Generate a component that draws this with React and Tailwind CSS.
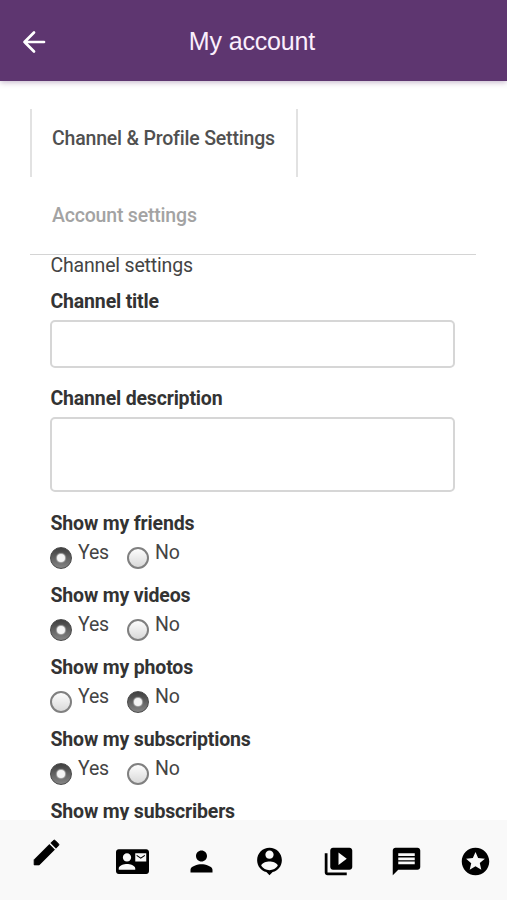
import React from "react";
import {
  MdContactMail,
  MdPerson,
  MdVideoLibrary,
  MdMessage,
  MdStars,
} from "react-icons/md";

function Radio({ checked }) {
  return checked ? (
    <span className="mt-3 flex h-[22px] w-[22px] shrink-0 items-center justify-center rounded-full border border-[#4a4a4a] bg-linear-to-b from-[#404040] to-[#858585]">
      <span className="h-2 w-2 rounded-full bg-[#f4f4f4] shadow-[0_0_1px_1px_#aaa]" />
    </span>
  ) : (
    <span className="mt-3 h-[22px] w-[22px] shrink-0 rounded-full border-2 border-[#808080] bg-linear-to-b from-[#fdfdfd] to-[#d9d9d9]" />
  );
}

function Option({ label, checked }) {
  return (
    <div className="flex h-[34px] w-[77px] gap-[6px]">
      <Radio checked={checked} />
      <span className="text-[19.5px] leading-[36px] tracking-[-0.2px] text-[#444]">{label}</span>
    </div>
  );
}

function Setting({ label, value }) {
  return (
    <div className="h-[72px]">
      <Label>{label}</Label>
      <div className="flex">
        <Option label="Yes" checked={value === "yes"} />
        <Option label="No" checked={value === "no"} />
      </div>
    </div>
  );
}

function Label({ children }) {
  return (
    <div className="h-6 pl-[0.5px] text-[19.5px] leading-[26px] font-bold tracking-[-0.17px] whitespace-nowrap text-[#333]">
      {children}
    </div>
  );
}

function Pencil() {
  return (
    <svg className="mt-4 ml-[30px] shrink-0" viewBox="0 0 24 24" width="33" height="33">
      <path
        fill="currentColor"
        stroke="currentColor"
        strokeWidth="0.6"
        d="M3 17.25V21h3.75L17.81 9.94l-3.75-3.75L3 17.25zM20.71 7.04a.996.996 0 0 0 0-1.41l-2.34-2.34a.996.996 0 0 0-1.41 0l-1.83 1.83 3.75 3.75 1.83-1.83z"
      />
    </svg>
  );
}

function PersonPin() {
  return (
    <svg viewBox="0 0 24 24" width="33" height="33" fill="currentColor">
      <path d="M12 2c-4.97 0-9 4.03-9 9 0 4.17 2.84 7.67 6.69 8.69L12 22l2.31-2.31C18.16 18.67 21 15.17 21 11c0-4.97-4.03-9-9-9zm0 2c1.66 0 3 1.34 3 3s-1.34 3-3 3-3-1.34-3-3 1.34-3 3-3zm0 14.3c-2.5 0-4.71-1.28-6-3.22.03-1.99 4-3.08 6-3.08 1.99 0 5.97 1.09 6 3.08-1.29 1.94-3.5 3.22-6 3.22z" />
    </svg>
  );
}

export default function App() {
  return (
    <div className="flex h-[900px] w-[507px] flex-col overflow-hidden bg-white font-['Roboto',sans-serif]">
      <header className="z-10 grid h-[81px] shrink-0 grid-cols-[60px_1fr_63px] items-center bg-[#5e3670] shadow-[0_1px_6px_rgba(94,54,112,0.4)]">
        <svg
          className="mt-[3px] ml-[22px]"
          width="24"
          height="24"
          viewBox="0 0 24 24"
          fill="none"
          stroke="#fff"
          strokeWidth="2.7"
          strokeLinecap="round"
          strokeLinejoin="round"
        >
          <path d="M22 12H2.5M12 2.5L2.5 12L12 21.5" />
        </svg>
        <h1 className="text-center font-['Liberation_Sans',sans-serif] text-[25px] leading-8 tracking-[-0.15px] text-[#fbeffc]">
          My account
        </h1>
      </header>

      <main className="h-[739px] shrink-0 px-[30px] pt-[28px]">
        <nav className="flex h-[146px] w-[446px] flex-col border-b border-[#d4d4d4] text-[19.5px] font-medium tracking-[-0.19px] whitespace-nowrap">
          <div className="h-[68px] w-[268px] border-x-2 border-[#e2e2e2] pl-5 leading-[60px] text-[#505050]">
            Channel &amp; Profile Settings
          </div>
          <div className="pl-[22px] leading-[77px] text-[#a3a3a3]">Account settings</div>
        </nav>
        <div className="pl-[20px]">
          <div className="h-[34px] pl-[0.5px] text-[19.5px] leading-[21px] tracking-[-0.18px] text-[#444]">
            Channel settings
          </div>
          <Label>Channel title</Label>
          <div className="mt-[7px] h-[48px] w-[405px] rounded-[5px] border-2 border-[#d6d6d6]" />
          <div className="h-[18px]" />
          <Label>Channel description</Label>
          <div className="mt-[7px] h-[75px] w-[405px] rounded-[5px] border-2 border-[#d6d6d6]" />
          <div className="h-[19px]" />
          <Setting label="Show my friends" value="yes" />
          <Setting label="Show my videos" value="yes" />
          <Setting label="Show my photos" value="no" />
          <Setting label="Show my subscriptions" value="yes" />
          <Label>Show my subscribers</Label>
        </div>
      </main>

      <footer className="flex h-20 shrink-0 bg-[#f9f9f9] pr-[15.5px] text-black">
        <Pencil />
        <div className="mt-[24.5px] ml-[53px] flex h-[33px] grow justify-between">
          <MdContactMail size={33} />
          <MdPerson size={33} />
          <PersonPin />
          <MdVideoLibrary size={33} />
          <MdMessage size={33} />
          <MdStars size={33} />
        </div>
      </footer>
    </div>
  );
}
